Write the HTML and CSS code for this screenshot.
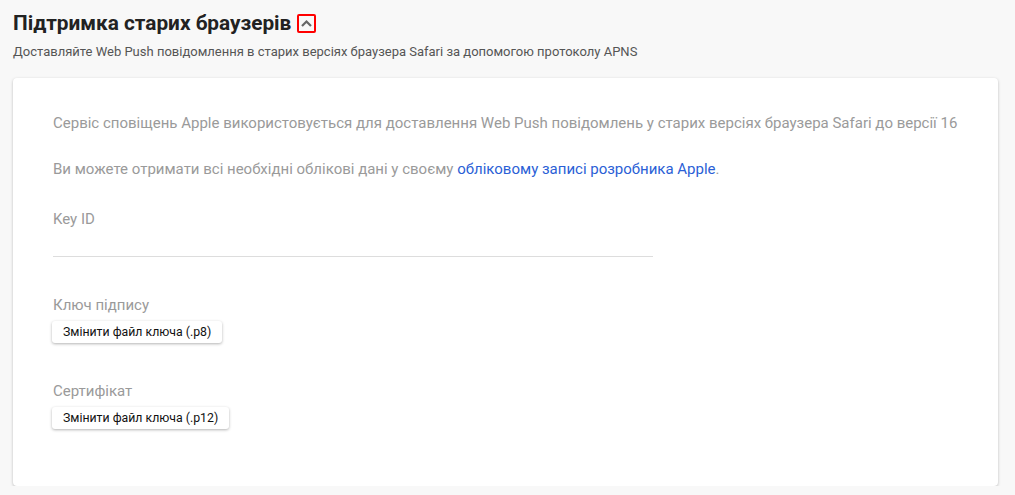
FILE: index.html
```html
<!DOCTYPE html>
<html lang="uk">
<head>
<meta charset="utf-8">
<title>Підтримка старих браузерів</title>
<link rel="stylesheet" href="styles.css">
</head>
<body>
<div class="page">
  <div class="title-row">
    <h2 class="title">Підтримка старих браузерів</h2>
    <span class="toggle">
      <svg width="15" height="15" viewBox="0 0 15 15"><path d="M3 10 L7.5 5.5 L12 10" fill="none" stroke="#666" stroke-width="2.2"/></svg>
    </span>
  </div>
  <p class="subtitle">Доставляйте Web Push повідомлення в старих версіях браузера Safari за допомогою протоколу APNS</p>
  <div class="card">
    <p class="text">Сервіс сповіщень Apple використовується для доставлення Web Push повідомлень у старих версіях браузера Safari до версії 16</p>
    <p class="text second">Ви можете отримати всі необхідні облікові дані у своєму <a class="link" href="#">обліковому записі розробника Apple</a>.</p>
    <div class="field">
      <label class="label">Key ID</label>
      <div class="input"></div>
    </div>
    <div class="field file">
      <label class="label">Ключ підпису</label>
      <button class="btn">Змінити файл ключа (.p8)</button>
    </div>
    <div class="field file">
      <label class="label">Сертифікат</label>
      <button class="btn">Змінити файл ключа (.p12)</button>
    </div>
  </div>
</div>
</body>
</html>
```
FILE: styles.css
```css
html, body {
  margin: 0;
  padding: 0;
  background: #f8f8f8;
  font-family: Roboto, "Noto Sans", sans-serif;
}
.page {
  padding: 11px 17px 0 13px;
}
.title-row {
  display: flex;
  align-items: center;
  height: 24px;
}
.title {
  margin: 0;
  font-size: 20.8px;
  line-height: 24px;
  font-weight: 700;
  color: #222;
}
.toggle {
  margin-left: 6px;
  width: 15px;
  height: 15px;
  border: 2px solid #f00;
  border-radius: 2px;
  display: flex;
  align-items: center;
  justify-content: center;
}
.subtitle {
  margin: 9px 0 0;
  font-size: 13px;
  line-height: 16px;
  color: #555;
}
.card {
  margin-top: 18px;
  background: #fff;
  border-radius: 4px;
  box-shadow: 0 1px 3px rgba(0,0,0,0.25);
  padding: 35px 40px 57px;
}
.text {
  margin: 0;
  font-size: 15px;
  line-height: 20px;
  color: #9a9a9a;
}
.text.second {
  margin-top: 26px;
}
.link {
  color: #2b5fd6;
  text-decoration: none;
}
.field {
  margin-top: 30px;
}
.field.file {
  margin-top: 38px;
}
.label {
  display: block;
  font-size: 15px;
  line-height: 20px;
  color: #9a9a9a;
}
.input {
  width: 600px;
  height: 27px;
  border-bottom: 1px solid #ddd;
}
.btn {
  display: block;
  margin: 6px 0 0 -1px;
  height: 22px;
  padding: 0 11px;
  border: none;
  border-radius: 3px;
  background: #fff;
  box-shadow: 0 1px 3px rgba(0,0,0,0.3);
  font-family: Roboto, "Noto Sans", sans-serif;
  font-size: 12.3px;
  color: #111;
}
```
